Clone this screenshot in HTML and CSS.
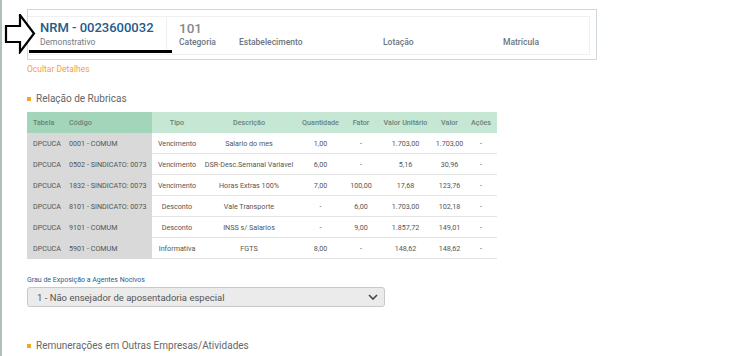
FILE: index.html
```html
<!DOCTYPE html>
<html lang="pt-BR">
<head>
  <meta charset="UTF-8" />
  <title>Rubricas</title>
  <link rel="stylesheet" href="styles.css">
</head>
<body>
  <div class="page">

    <div class="resumo-wrap">
      <svg class="seta" width="32" height="40" viewBox="0 0 32 40">
        <path d="M2 12 H16 V1 L30 19.5 L16 38 V28 H2 Z" fill="#fff" stroke="#000" stroke-width="2.2" />
      </svg>
      <div class="resumo">
        <div class="resumo-inner">
          <div class="resumo-id">
            <div class="nrm">NRM - 0023600032</div>
            <div class="sub">Demonstrativo</div>
          </div>
          <div class="resumo-info">
            <div class="cat-num">101</div>
            <div class="labels">
              <span class="lbl lbl-cat">Categoria</span>
              <span class="lbl lbl-est">Estabelecimento</span>
              <span class="lbl lbl-lot">Lotação</span>
              <span class="lbl">Matrícula</span>
            </div>
          </div>
        </div>
      </div>
      <div class="sublinhado"></div>
    </div>

    <a class="ocultar" href="#">Ocultar Detalhes</a>

    <h3 class="secao">Relação de Rubricas</h3>

    <table class="rubricas">
      <colgroup>
        <col style="width:36px"><col style="width:89px"><col style="width:50px"><col style="width:94px">
        <col style="width:49px"><col style="width:32px"><col style="width:57px"><col style="width:31px"><col style="width:32px">
      </colgroup>
      <thead>
        <tr>
          <th class="fixa esq">Tabela</th>
          <th class="fixa esq">Código</th>
          <th>Tipo</th>
          <th>Descrição</th>
          <th>Quantidade</th>
          <th>Fator</th>
          <th>Valor Unitário</th>
          <th>Valor</th>
          <th>Ações</th>
        </tr>
      </thead>
      <tbody>
        <tr>
          <td class="fixa esq">DPCUCA</td><td class="fixa esq">0001 - COMUM</td>
          <td>Vencimento</td><td>Salario do mes</td><td>1,00</td><td>-</td><td>1.703,00</td><td>1.703,00</td><td>-</td>
        </tr>
        <tr>
          <td class="fixa esq">DPCUCA</td><td class="fixa esq">0502 - SINDICATO: 0073</td>
          <td>Vencimento</td><td>DSR-Desc.Semanal Variavel</td><td>6,00</td><td>-</td><td>5,16</td><td>30,96</td><td>-</td>
        </tr>
        <tr>
          <td class="fixa esq">DPCUCA</td><td class="fixa esq">1832 - SINDICATO: 0073</td>
          <td>Vencimento</td><td>Horas Extras 100%</td><td>7,00</td><td>100,00</td><td>17,68</td><td>123,76</td><td>-</td>
        </tr>
        <tr>
          <td class="fixa esq">DPCUCA</td><td class="fixa esq">8101 - SINDICATO: 0073</td>
          <td>Desconto</td><td>Vale Transporte</td><td>-</td><td>6,00</td><td>1.703,00</td><td>102,18</td><td>-</td>
        </tr>
        <tr>
          <td class="fixa esq">DPCUCA</td><td class="fixa esq">9101 - COMUM</td>
          <td>Desconto</td><td>INSS s/ Salarios</td><td>-</td><td>9,00</td><td>1.857,72</td><td>149,01</td><td>-</td>
        </tr>
        <tr>
          <td class="fixa esq">DPCUCA</td><td class="fixa esq">5901 - COMUM</td>
          <td>Informativa</td><td>FGTS</td><td>8,00</td><td>-</td><td>148,62</td><td>148,62</td><td>-</td>
        </tr>
      </tbody>
    </table>

    <div class="campo">
      <label class="campo-lbl">Grau de Exposição a Agentes Nocivos</label>
      <div class="select">
        <span>1 - Não ensejador de aposentadoria especial</span>
        <svg width="10" height="6" viewBox="0 0 10 6"><path d="M1 1 L5 5 L9 1" fill="none" stroke="#444" stroke-width="1.6" /></svg>
      </div>
    </div>

    <h3 class="secao secao-2">Remunerações em Outras Empresas/Atividades</h3>
  </div>
</body>
</html>
```

FILE: styles.css
```css
body {
  margin: 0;
  font-family: Roboto, "Liberation Sans", sans-serif;
  background: #fff;
  color: #555;
  height: 356px;
  overflow: hidden;
}

.page {
  border-left: 2px solid #aebfbf;
  height: 356px;
  padding: 9px 0 0 25px;
  box-sizing: border-box;
}

.resumo-wrap {
  position: relative;
  width: 570px;
}

.resumo {
  border: 1px solid #cfd8dc;
  height: 51px;
  padding: 6px 6px 6px 0;
  box-sizing: border-box;
}

.resumo-inner {
  display: flex;
  height: 37px;
  border: 1px solid #f0f0f0;
  border-left: none;
}

.resumo-id {
  width: 126px;
  padding: 3px 0 0 12px;
  border-right: 1px solid #f0f0f0;
}

.nrm {
  color: #245a8c;
  font-size: 13px;
  font-weight: 500;
  line-height: 16px;
}

.sub {
  color: #6d7b8a;
  font-size: 8.5px;
  margin-top: 1px;
}

.resumo-info {
  padding: 3px 0 0 12px;
}

.cat-num {
  color: #888;
  font-size: 13.5px;
  font-weight: 500;
  line-height: 16px;
}

.labels {
  margin-top: 1px;
  font-size: 8.5px;
  font-weight: 500;
  color: #6b7580;
  display: flex;
}

.lbl-cat { width: 60px; }
.lbl-est { width: 144px; }
.lbl-lot { width: 120px; }

.seta {
  position: absolute;
  left: -23px;
  top: 5px;
}

.sublinhado {
  position: absolute;
  left: 2px;
  top: 41px;
  width: 143px;
  height: 3px;
  background: #000;
}

.ocultar {
  display: block;
  margin-top: 4px;
  color: #f5a04a;
  font-size: 8.5px;
  text-decoration: none;
}

.secao {
  margin: 19px 0 0 0;
  font-size: 10px;
  font-weight: 400;
  color: #666;
  display: flex;
  align-items: center;
  gap: 5px;
}

.secao::before {
  content: "";
  width: 4px;
  height: 4px;
  background: #f5a623;
}

.rubricas {
  margin-top: 8px;
  border-collapse: collapse;
  table-layout: fixed;
  width: 470px;
  font-size: 7.2px;
}

.rubricas th {
  background: #c6e7d4;
  color: #6a8277;
  font-weight: 500;
  height: 21px;
  text-align: center;
  padding: 0;
}

.rubricas th.fixa {
  background: #a3d5ba;
}

.rubricas td {
  height: 20px;
  text-align: center;
  padding: 0;
  color: #555;
  border-bottom: 1px solid #e3e3e3;
}

.rubricas td.fixa {
  background: #d9d9d9;
  border-bottom-color: #d9d9d9;
}

.rubricas .esq {
  text-align: left;
  padding-left: 6px;
}

.campo {
  margin-top: 17px;
}

.campo-lbl {
  display: block;
  font-size: 7px;
  color: #2a5d8f;
  margin-bottom: 3px;
}

.select {
  width: 358px;
  height: 20px;
  box-sizing: border-box;
  background: #ebebeb;
  border: 1px solid #c8c8c8;
  border-radius: 3px;
  display: flex;
  align-items: center;
  justify-content: space-between;
  padding: 0 6px 0 9px;
  font-size: 9.5px;
  color: #555;
}

.secao-2 {
  margin-top: 33px;
}
```
